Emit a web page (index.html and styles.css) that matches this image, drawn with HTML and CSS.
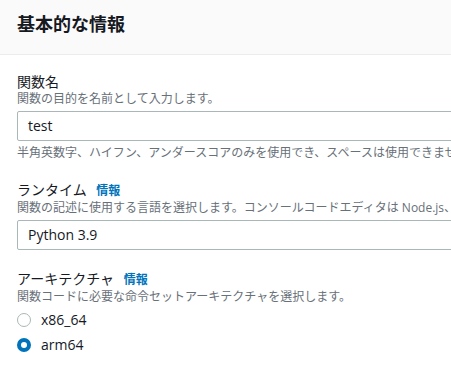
FILE: index.html
```html
<!DOCTYPE html>
<html>
	<head>
		<meta charset="utf-8" />
		<title>基本的な情報</title>
		<link rel="stylesheet" href="styles.css">
	</head>
	<body>
		<div class="panel">
			<div class="panel-head">
				<h2>基本的な情報</h2>
			</div>
			<div class="panel-body">
				<div class="field">
					<div class="label">関数名</div>
					<div class="desc">関数の目的を名前として入力します。</div>
					<div class="input">test</div>
					<div class="desc hint">半角英数字、ハイフン、アンダースコアのみを使用でき、スペースは使用できません。</div>
				</div>
				<div class="field">
					<div class="label">ランタイム <a class="info" href="#">情報</a></div>
					<div class="desc">関数の記述に使用する言語を選択します。コンソールコードエディタは Node.js、Python、および Ruby のみをサポートしています。</div>
					<div class="input">Python 3.9</div>
				</div>
				<div class="field">
					<div class="label">アーキテクチャ <a class="info" href="#">情報</a></div>
					<div class="desc">関数コードに必要な命令セットアーキテクチャを選択します。</div>
					<ul class="radios">
						<li><span class="radio"></span>x86_64</li>
						<li><span class="radio checked"></span>arm64</li>
					</ul>
				</div>
			</div>
		</div>
	</body>
</html>
```

FILE: styles.css
```css
body,div,ul,li,h2{
	margin: 0;
	padding: 0;
}

ul{
	list-style-type: none;
}

html,body{
	overflow: hidden;
}

body{
	background: #ffffff;
	color: #16191f;
	font-family: "Open Sans", "Noto Sans CJK JP", sans-serif;
	font-size: 14px;
}

.panel{
	width: 700px;
}

.panel-head{
	background: #fafafa;
	border-bottom: 1px solid #eaeded;
	padding: 13px 17px 19px;
}

.panel-head h2{
	font-size: 18px;
	line-height: 22px;
	font-weight: 700;
}

.panel-body{
	padding: 18px 17px 0;
}

.field{
	margin-bottom: 20px;
}

.label{
	font-size: 14px;
	line-height: 18px;
	white-space: nowrap;
}

.info{
	color: #0073bb;
	font-size: 12px;
	font-weight: 700;
	text-decoration: none;
	margin-left: 6px;
}

.desc{
	color: #687078;
	font-size: 12px;
	line-height: 16px;
	white-space: nowrap;
}

.input{
	margin-top: 4px;
	height: 28px;
	line-height: 28px;
	border: 1px solid #aab7b8;
	border-radius: 2px;
	padding: 0 10px;
	font-size: 14px;
	font-weight: 500;
	color: #16191f;
}

.hint{
	margin-top: 4px;
}

.radios{
	margin-top: 2px;
}

.radios li{
	display: flex;
	align-items: center;
	height: 25px;
	font-size: 14px;
	font-weight: 500;
}

.radio{
	width: 14px;
	height: 14px;
	box-sizing: border-box;
	border: 1px solid #aab7b8;
	border-radius: 50%;
	margin-right: 10px;
}

.radio.checked{
	border: 4px solid #0073bb;
}
```
